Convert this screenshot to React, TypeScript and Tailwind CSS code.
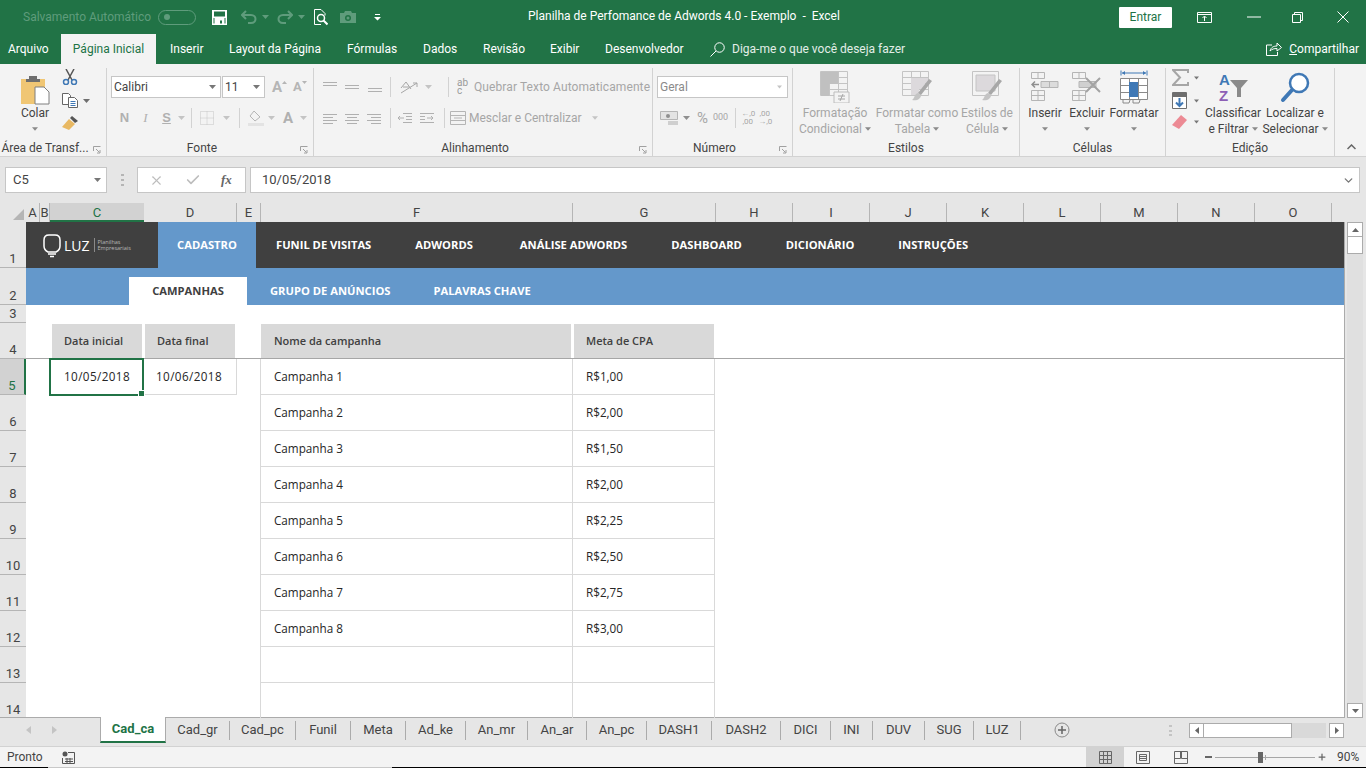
import React from "react";
import { ChevronDown, X, Check, Plus } from "lucide-react";

const ui = "font-['Roboto','Noto_Sans',sans-serif]";

const columns = [
  { name: "A", w: "w-[14px]" },
  { name: "B", w: "w-[10px]" },
  { name: "C", w: "w-[94px]", active: true },
  { name: "D", w: "w-[93px]" },
  { name: "E", w: "w-[24px]" },
  { name: "F", w: "w-[312px]" },
  { name: "G", w: "w-[143px]" },
  { name: "H", w: "w-[77px]" },
  { name: "I", w: "w-[77px]" },
  { name: "J", w: "w-[77px]" },
  { name: "K", w: "w-[77px]" },
  { name: "L", w: "w-[77px]" },
  { name: "M", w: "w-[77px]" },
  { name: "N", w: "w-[77px]" },
  { name: "O", w: "w-[77px]" },
];

const rows = [
  { n: 1, h: "h-[46px]" },
  { n: 2, h: "h-[37px]" },
  { n: 3, h: "h-[18px]" },
  { n: 4, h: "h-[36px]" },
  { n: 5, h: "h-[36px]", active: true },
  { n: 6, h: "h-[36px]" },
  { n: 7, h: "h-[36px]" },
  { n: 8, h: "h-[36px]" },
  { n: 9, h: "h-[36px]" },
  { n: 10, h: "h-[36px]" },
  { n: 11, h: "h-[36px]" },
  { n: 12, h: "h-[36px]" },
  { n: 13, h: "h-[36px]" },
  { n: 14, h: "h-[36px]" },
];

const campaigns = [
  ["Campanha 1", "R$1,00"],
  ["Campanha 2", "R$2,00"],
  ["Campanha 3", "R$1,50"],
  ["Campanha 4", "R$2,00"],
  ["Campanha 5", "R$2,25"],
  ["Campanha 6", "R$2,50"],
  ["Campanha 7", "R$2,75"],
  ["Campanha 8", "R$3,00"],
  ["", ""],
  ["", ""],
];

const sheets = [
  { name: "Cad_ca", w: "w-[66px]", active: true },
  { name: "Cad_gr", w: "w-[64px]" },
  { name: "Cad_pc", w: "w-[66px]" },
  { name: "Funil", w: "w-[55px]" },
  { name: "Meta", w: "w-[55px]" },
  { name: "Ad_ke", w: "w-[60px]" },
  { name: "An_mr", w: "w-[62px]" },
  { name: "An_ar", w: "w-[59px]" },
  { name: "An_pc", w: "w-[60px]" },
  { name: "DASH1", w: "w-[65px]" },
  { name: "DASH2", w: "w-[69px]" },
  { name: "DICI", w: "w-[50px]" },
  { name: "INI", w: "w-[42px]" },
  { name: "DUV", w: "w-[52px]" },
  { name: "SUG", w: "w-[49px]" },
  { name: "LUZ", w: "w-[47px]" },
];

const Caret = ({ className = "" }: { className?: string }) => (
  <svg width="7" height="4" viewBox="0 0 7 4" className={`shrink-0 ${className}`}>
    <path d="M0 0h7L3.5 4z" fill="currentColor" />
  </svg>
);

function Group({ label, w, launcher, children }: { label: string; w: string; launcher?: boolean; children: React.ReactNode }) {
  return (
    <div className={`${w} shrink-0 h-[88px] mt-[4px] border-r border-[#d2d2d2] flex flex-col relative`}>
      <div className="h-[72px] flex">{children}</div>
      <div className={`h-[16px] text-[12px] leading-[16px] text-[#444] text-center whitespace-nowrap ${launcher ? "pr-[16px]" : ""}`}>{label}</div>
      {launcher && (
        <svg width="8" height="8" viewBox="0 0 8 8" className="absolute right-[5px] bottom-[2px] text-[#a0a0a0]">
          <path d="M.5 5V.5H7.5" fill="none" stroke="currentColor" />
          <path d="M3 3l3.5 3.5M7 4v3H4" fill="none" stroke="currentColor" />
        </svg>
      )}
    </div>
  );
}

function BigButton({ w, line1, line2, caret, off, children }: { w: string; line1: string; line2?: string; caret?: boolean; off?: boolean; children: React.ReactNode }) {
  return (
    <div className={`${w} shrink-0 flex flex-col items-center text-[12px] leading-[16px] ${off ? "text-[#a6a6a6]" : "text-[#444]"}`}>
      <div className="h-[36px] mt-[1px] flex items-center justify-center">{children}</div>
      <div className="whitespace-nowrap">{line1}</div>
      <div className="whitespace-nowrap flex items-center justify-center gap-[3px] h-[16px]">
        {line2}
        {caret && <Caret className="w-[6px] text-[#8a8a8a]" />}
      </div>
    </div>
  );
}

const CondIcon = () => (
  <svg width="30" height="32" viewBox="0 0 30 32">
    <path d="M.5.5h27v24H.5zM9.5.5v24M18.5.5v24M.5 6.5h27M.5 12.5h27M.5 18.5h27" fill="none" stroke="#c4c4c4" />
    <path d="M1 1h8v24H1zM9 1h9v6H9zM9 7h9v6H9z" fill="#c0c0c0" />
    <path d="M14 21h15v11H14z" fill="#f3f3f3" stroke="#bdbdbd" />
    <path d="M18 25h7M18 28h7M23 23l-3 7" stroke="#a6a6a6" fill="none" />
  </svg>
);

const TableIcon = () => (
  <svg width="30" height="32" viewBox="0 0 30 32">
    <path d="M.5.5h26v24H.5zM9.5.5v24M18.5.5v24M.5 6.5h26M.5 12.5h26M.5 18.5h26" fill="none" stroke="#c4c4c4" />
    <path d="M9 7h17v5H9zM9 12h14v6H9zM9 18h8v6H9z" fill="#dcd9dc" />
    <path d="M30 10l-11 14-3-2 11-14z" fill="#a8a8a8" />
    <path d="M16 22c-4 1-3 5-6 7 5 1 9-1 9-5z" fill="#c4c4c4" />
  </svg>
);

const CellStyleIcon = () => (
  <svg width="30" height="32" viewBox="0 0 30 32">
    <path d="M.5.5h26v24H.5z" fill="none" stroke="#c4c4c4" />
    <path d="M4 4h19v16H4z" fill="#dcd9dc" stroke="#c4c4c4" />
    <path d="M30 10l-11 14-3-2 11-14z" fill="#a8a8a8" />
    <path d="M16 22c-4 1-3 5-6 7 5 1 9-1 9-5z" fill="#c4c4c4" />
  </svg>
);

const InsertIcon = () => (
  <svg width="28" height="30" viewBox="0 0 28 30">
    <path d="M.5.5h13v6H.5zM7 .5v6M.5 18.5h13v10H.5zM7 18.5v10M.5 23.5h13" fill="none" stroke="#b5b5b5" />
    <path d="M10 9.5h17v6H10zM18.5 9.5v6" fill="#dcdcdc" stroke="#b5b5b5" />
    <path d="M8 12.5H1M4 9.5l-3 3 3 3" fill="none" stroke="#8f8f8f" strokeWidth="1.5" />
  </svg>
);

const DeleteIcon = () => (
  <svg width="30" height="30" viewBox="0 0 30 30">
    <path d="M.5.5h13v6H.5zM7 .5v6M.5 18.5h13v10H.5zM7 18.5v10M.5 23.5h13" fill="none" stroke="#b5b5b5" />
    <path d="M7 9.5h17v6H7z" fill="#d0d0d0" stroke="#b5b5b5" />
    <path d="M14 6l14 14M28 6L14 20" stroke="#a3a3a3" strokeWidth="2" />
  </svg>
);

const FormatIcon = () => (
  <svg width="28" height="34" viewBox="0 0 28 34">
    <path d="M1 .5v5M27 .5v5M2 3h24" fill="none" stroke="#3f78b5" />
    <path d="M2 3l3-2v4zM26 3l-3-2v4z" fill="#3f78b5" />
    <path d="M.5 8.5h27v21H.5zM9.5 8.5v21M18.5 8.5v21M.5 15.5h27M.5 22.5h27" fill="#fff" stroke="#8a8a8a" />
    <path d="M9 12h9v15H9z" fill="#3f78b5" />
    <path d="M3 30v3h6l1-3M13 30v3h6l1-3" fill="none" stroke="#8a8a8a" />
  </svg>
);

const AlignLines = ({ pattern }: { pattern: string }) => (
  <svg width="16" height="14" viewBox="0 0 16 14" className="text-[#b0b0b0]">
    <path d={pattern} stroke="currentColor" strokeWidth="1" fill="none" />
  </svg>
);

export default function App() {
  return (
    <div className={`w-[1366px] h-[768px] overflow-hidden flex flex-col bg-[#e6e6e6] ${ui}`}>
      {/* title bar */}
      <div className="h-[34px] shrink-0 bg-[#217346] flex items-center text-white relative">
        <span className="ml-[23px] w-[135px] text-[12px] text-[#5f9c7c] whitespace-nowrap">Salvamento Automático</span>
        <div className="w-[38px] h-[15px] rounded-full border border-[#5f9c7c] flex items-center pl-[5px]">
          <div className="w-[6px] h-[6px] rounded-full bg-[#5f9c7c]" />
        </div>
        <svg width="15" height="15" viewBox="0 0 15 15" className="ml-[16px]">
          <path d="M0 0h15v15H0z" fill="#fff" />
          <path d="M2 1.500h11v5H2zM1.500 8h1v5.500h-1zM12.500 8h1v5.500h-1z" fill="#217346" />
          <path d="M8 10.500h2v3H8z" fill="#217346" />
        </svg>
        <svg width="16" height="14" viewBox="0 0 16 14" className="ml-[14px] text-[#5f9c7c]">
          <path d="M5 1L1 5l4 4M1 5h9c6 0 6 8 0 8H7" fill="none" stroke="currentColor" strokeWidth="2" />
        </svg>
        <Caret className="ml-[5px] text-[#5f9c7c]" />
        <svg width="16" height="14" viewBox="0 0 16 14" className="ml-[8px] text-[#5f9c7c]">
          <path d="M11 1l4 4-4 4M15 5H6c-6 0-6 8 0 8h3" fill="none" stroke="currentColor" strokeWidth="2" />
        </svg>
        <Caret className="ml-[5px] text-[#5f9c7c]" />
        <svg width="15" height="17" viewBox="0 0 15 17" className="ml-[8px]">
          <path d="M8 .5H1.5v15H8M8 .5l4 4v2" fill="none" stroke="#fff" />
          <circle cx="8" cy="9" r="3.5" fill="none" stroke="#fff" strokeWidth="1.5" />
          <path d="M10.5 11.5l4 4" stroke="#fff" strokeWidth="2" />
        </svg>
        <svg width="16" height="12" viewBox="0 0 16 12" className="ml-[12px] text-[#5f9c7c]">
          <path d="M0 2h4l1-2h6l1 2h4v10H0z" fill="currentColor" />
          <circle cx="8" cy="7" r="3" fill="#217346" />
          <circle cx="8" cy="7" r="1.5" fill="currentColor" />
        </svg>
        <svg width="7" height="7" viewBox="0 0 7 7" className="ml-[18px]">
          <path d="M1 0h5v1H1zM0 3h7L3.5 6.5z" fill="#fff" />
        </svg>
        <span className="absolute left-[528px] top-[8px] text-[12px] leading-[16px] whitespace-pre">Planilha de Perfomance de Adwords 4.0 - Exemplo  -  Excel</span>
        <div className="ml-auto flex items-center">
          <div className="w-[53px] h-[21px] bg-white rounded-[1px] text-[#217346] text-[12px] flex items-center justify-center">Entrar</div>
          <svg width="15" height="11" viewBox="0 0 15 11" className="ml-[25px]">
            <path d="M.5.5h14v10H.5zM.5 2.5h14M7.500 9V4.500M5.500 6l2-2 2 2" fill="none" stroke="#fff" />
          </svg>
          <svg width="14" height="2" viewBox="0 0 14 2" className="ml-[35px]"><path d="M0 1h14" stroke="#fff" /></svg>
          <svg width="11" height="11" viewBox="0 0 11 11" className="ml-[31px]">
            <path d="M.5 2.5h8v8h-8zM2.5 2.5v-2h8v8h-2" fill="none" stroke="#fff" />
          </svg>
          <svg width="12" height="12" viewBox="0 0 12 12" className="ml-[34px] mr-[17px]"><path d="M.5.5l11 11M11.500.5l-11 11" stroke="#fff" /></svg>
        </div>
      </div>

      {/* ribbon tabs */}
      <div className="h-[30px] shrink-0 bg-[#217346] flex items-stretch text-white text-[12px]">
        <span className="ml-[8px] w-[53px] leading-[30px]">Arquivo</span>
        <span className="w-[95px] bg-[#f3f3f3] text-[#217346] text-center leading-[30px]">Página Inicial</span>
        <span className="ml-[14px] w-[59px] leading-[30px]">Inserir</span>
        <span className="w-[118px] leading-[30px]">Layout da Página</span>
        <span className="w-[76px] leading-[30px]">Fórmulas</span>
        <span className="w-[60px] leading-[30px]">Dados</span>
        <span className="w-[67px] leading-[30px]">Revisão</span>
        <span className="w-[55px] leading-[30px]">Exibir</span>
        <span className="w-[105px] leading-[30px]">Desenvolvedor</span>
        <div className="flex items-center">
          <svg width="15" height="15" viewBox="0 0 15 15">
            <circle cx="9.500" cy="5.500" r="4.750" fill="none" stroke="#fff" />
            <path d="M6 9l-5.500 5.500" stroke="#fff" />
          </svg>
          <span className="ml-[7px] text-[#e3eee8]">Diga-me o que você deseja fazer</span>
        </div>
        <div className="ml-auto mr-[7px] flex items-center">
          <svg width="16" height="14" viewBox="0 0 16 14" className="mr-[7px]">
            <path d="M6 3H.5v10.5h11V10M4 9c1-4 4-5 7-5V1l4.500 4.500L11 9V6.500C8 6.500 6 7 4 9z" fill="none" stroke="#fff" />
          </svg>
          <span><span className="underline">C</span>ompartilhar</span>
        </div>
      </div>

      {/* ribbon */}
      <div className="h-[93px] shrink-0 bg-[#f3f3f3] border-b border-[#d2d2d2] flex relative">
        <Group label="Área de Transf..." w="w-[107px]" launcher>
          <BigButton w="w-[54px] ml-[8px]" line1="Colar" caret>
            <svg width="30" height="30" viewBox="0 0 30 30" className="mt-[6px]">
              <path d="M1 4h24v25H1z" fill="#f0c674" />
              <path d="M9 1h8v3h3v3H6V4h3z" fill="#6e6e6e" />
              <path d="M15 12h9l5 5v12H15z" fill="#fff" stroke="#7f7f7f" />
            </svg>
          </BigButton>
          <div className="flex flex-col items-start pt-[1px] gap-[8px] text-[#6e6e6e]">
            <svg width="16" height="16" viewBox="0 0 16 16">
              <path d="M4 0l6 11M12 0L6 11" stroke="#555" strokeWidth="1.5" />
              <circle cx="4" cy="13" r="2.5" fill="none" stroke="#3f78b5" strokeWidth="1.5" />
              <circle cx="12" cy="13" r="2.5" fill="none" stroke="#3f78b5" strokeWidth="1.5" />
            </svg>
            <div className="flex items-center gap-[5px]">
              <svg width="16" height="15" viewBox="0 0 16 15">
                <path d="M.5.5h6l2 2v9h-8z" fill="#fff" stroke="#666" />
                <path d="M6.500 4.500h6l3 3v7h-9z" fill="#fff" stroke="#666" />
                <path d="M8.500 8.500h5M8.500 10.500h5M8.500 12.500h5" stroke="#3f78b5" />
              </svg>
              <Caret />
            </div>
            <svg width="16" height="15" viewBox="0 0 16 15">
              <path d="M10 0l6 5-3 2-5-5z" fill="#555" />
              <path d="M7 3l6 5-6 6-7-3z" fill="#e8b862" />
            </svg>
          </div>
        </Group>

        <Group label="Fonte" w="w-[207px]" launcher>
          <div className="flex flex-col pl-[4px]">
            <div className="mt-[8px] flex items-center">
              <div className="w-[110px] h-[22px] bg-white border border-[#c6c6c6] flex items-center justify-between px-[2px] text-[12px] text-[#444]">
                Calibri
                <Caret className="mr-[2px] text-[#777]" />
              </div>
              <div className="ml-px w-[43px] h-[22px] bg-white border border-[#c6c6c6] flex items-center justify-between px-[2px] text-[12px] text-[#444]">
                11
                <Caret className="mr-[2px] text-[#777]" />
              </div>
              <span className="ml-[7px] text-[15px] leading-[18px] font-bold text-[#b5b5b5]">A</span>
              <svg width="5" height="3" viewBox="0 0 5 3" className="-mt-[10px] text-[#b5b5b5]"><path d="M0 3h5L2.500 0z" fill="currentColor" /></svg>
              <span className="ml-[6px] text-[13px] leading-[18px] font-bold text-[#b5b5b5]">A</span>
              <svg width="5" height="3" viewBox="0 0 5 3" className="-mt-[10px] text-[#b5b5b5]"><path d="M0 0h5L2.500 3z" fill="currentColor" /></svg>
            </div>
            <div className="mt-[9px] ml-[3px] flex items-center text-[#b0b0b0] h-[22px]">
              <span className="w-[21px] text-[13px] font-bold text-center font-['Liberation_Sans',sans-serif]">N</span>
              <span className="w-[21px] text-[13px] italic text-center font-['Liberation_Serif',serif]">I</span>
              <span className="w-[21px] text-[13px] font-bold underline text-center font-['Liberation_Sans',sans-serif]">S</span>
              <Caret className="ml-[1px] text-[#c4c4c4]" />
              <div className="ml-[6px] w-px h-[20px] bg-[#d2d2d2]" />
              <svg width="14" height="14" viewBox="0 0 14 14" className="ml-[8px]">
                <path d="M.5.5h13v13H.5zM7 .5v13M.5 7h13" fill="none" stroke="#c4c4c4" strokeDasharray="1 1" />
              </svg>
              <Caret className="ml-[9px] text-[#c4c4c4]" />
              <div className="ml-[9px] w-px h-[20px] bg-[#d2d2d2]" />
              <svg width="16" height="16" viewBox="0 0 16 16" className="ml-[8px]">
                <path d="M6 1l6 6-5 4-5-5z" fill="none" stroke="#b5b5b5" />
                <path d="M0 13h16v3H0z" fill="#e3e3e3" />
              </svg>
              <Caret className="ml-[4px] text-[#c4c4c4]" />
              <span className="ml-[8px] text-[15px] font-bold">A</span>
              <Caret className="ml-[7px] text-[#c4c4c4]" />
            </div>
          </div>
        </Group>

        <Group label="Alinhamento" w="w-[339px]" launcher>
          <div className="flex flex-col pl-[8px]">
            <div className="mt-[8px] h-[22px] flex items-center gap-[6px]">
              <AlignLines pattern="M1 2.500h14M1 5.500h14" />
              <AlignLines pattern="M1 5.500h14M1 8.500h14" />
              <AlignLines pattern="M2 8.500h14M2 11.500h14" />
              <div className="ml-[2px] w-px h-[20px] bg-[#d2d2d2]" />
              <svg width="20" height="16" viewBox="0 0 20 16" className="ml-[2px] text-[#a6a6a6]">
                <path d="M2 9l5-6 5 7M4 8h6M2 14L18 4M18 4h-4M18 4v4" fill="none" stroke="currentColor" />
              </svg>
              <Caret className="text-[#c4c4c4]" />
              <div className="ml-[10px] w-px h-[20px] bg-[#d2d2d2]" />
              <span className="ml-[2px] w-[12px] text-[10px] leading-[8px] text-[#9a9a9a]">ab c</span>
              <span className="-ml-[1px] text-[12px] tracking-[0.1px] text-[#a6a6a6] whitespace-nowrap">Quebrar Texto Automaticamente</span>
            </div>
            <div className="mt-[9px] h-[22px] flex items-center gap-[6px]">
              <AlignLines pattern="M1 3.500h14M1 6.500h10M1 9.500h14M1 12.500h10" />
              <AlignLines pattern="M1 3.500h14M3 6.500h10M1 9.500h14M3 12.500h10" />
              <AlignLines pattern="M1 3.500h14M5 6.500h10M1 9.500h14M5 12.500h10" />
              <div className="ml-[2px] w-px h-[20px] bg-[#d2d2d2]" />
              <AlignLines pattern="M6 2.500h9M9 5.500h6M9 8.500h6M6 11.500h9M1 7h6M3 5L1 7l2 2" />
              <AlignLines pattern="M1 2.500h14M1 5.500h5M1 8.500h5M1 11.500h14M8 7h6M12 5l2 2-2 2" />
              <div className="ml-[3px] w-px h-[20px] bg-[#d2d2d2]" />
              <svg width="16" height="14" viewBox="0 0 16 14" className="-ml-[1px]">
                <path d="M.5.5h15v13H.5zM.5 4.500h15M.5 9.500h15M4 7h8" fill="none" stroke="#b5b5b5" />
              </svg>
              <span className="-ml-[3px] text-[12px] text-[#a6a6a6] whitespace-nowrap">Mesclar e Centralizar</span>
              <Caret className="ml-[4px] w-[6px] text-[#c4c4c4]" />
            </div>
          </div>
        </Group>

        <Group label="Número" w="w-[140px]" launcher>
          <div className="flex flex-col pl-[4px]">
            <div className="mt-[8px] w-[131px] h-[22px] bg-white border border-[#c6c6c6] flex items-center justify-between px-[2px] text-[12px] text-[#8a8a8a]">
              Geral
              <Caret className="mr-[3px] w-[5px] text-[#c4c4c4]" />
            </div>
            <div className="mt-[9px] h-[22px] flex items-center text-[#a6a6a6]">
              <svg width="18" height="15" viewBox="0 0 18 15" className="ml-[3px]">
                <path d="M.5.500h17v8H.5z" fill="#e3e3e3" stroke="#b5b5b5" />
                <circle cx="8" cy="5" r="2" fill="#8f8f8f" />
                <path d="M8 11h10M8 13h10" stroke="#c4c4c4" strokeWidth="1.500" />
              </svg>
              <Caret className="ml-[5px] text-[#8f8f8f]" />
              <span className="ml-[7px] text-[15px] leading-[18px]">%</span>
              <span className="ml-[5px] text-[9px]">000</span>
              <div className="ml-[7px] w-px h-[20px] bg-[#d2d2d2]" />
              <span className="ml-[5px] w-[13px] text-[8px] leading-[8px] text-center">←,0 ,00</span>
              <span className="ml-[4px] w-[13px] text-[8px] leading-[8px] text-center">,00 →,0</span>
            </div>
          </div>
        </Group>

        <Group label="Estilos" w="w-[227px]">
          <BigButton w="w-[84px]" line1="Formatação" line2="Condicional" caret off><CondIcon /></BigButton>
          <BigButton w="w-[80px]" line1="Formatar como" line2="Tabela" caret off><TableIcon /></BigButton>
          <BigButton w="w-[60px]" line1="Estilos de" line2="Célula" caret off><CellStyleIcon /></BigButton>
        </Group>

        <Group label="Células" w="w-[146px]">
          <BigButton w="w-[42px] ml-[4px]" line1="Inserir" caret><InsertIcon /></BigButton>
          <BigButton w="w-[42px]" line1="Excluir" caret><DeleteIcon /></BigButton>
          <BigButton w="w-[52px]" line1="Formatar" caret><FormatIcon /></BigButton>
        </Group>

        <Group label="Edição" w="w-[169px]">
          <div className="w-[36px] pl-[6px] pt-[1px] flex flex-col gap-[6px] text-[#777]">
            <div className="flex items-center gap-[5px]">
              <svg width="17" height="17" viewBox="0 0 17 17"><path d="M16 4V1H1l7 7.500L1 16h15v-3" fill="none" stroke="#a6a6a6" strokeWidth="2" /></svg>
              <Caret className="w-[5px]" />
            </div>
            <div className="flex items-center gap-[5px]">
              <svg width="15" height="17" viewBox="0 0 15 17">
                <path d="M.5.500h14v16H.5z" fill="#fff" stroke="#6e6e6e" />
                <path d="M1 1h13v4H1z" fill="#6e6e6e" />
                <path d="M7.500 6v8M4 10.500l3.500 3.500 3.500-3.500" fill="none" stroke="#3f78b5" strokeWidth="2" />
              </svg>
              <Caret className="ml-[2px] w-[5px]" />
            </div>
            <div className="flex items-center gap-[5px]">
              <svg width="15" height="14" viewBox="0 0 15 14"><path d="M9 0l6 5-8 9-7-4z" fill="#ec8a94" /></svg>
              <Caret className="ml-[2px] w-[5px]" />
            </div>
          </div>
          <BigButton w="w-[62px]" line1="Classificar" line2="e Filtrar" caret>
            <svg width="30" height="32" viewBox="0 0 30 32">
              <text x="1" y="14" fontSize="15" fontWeight="700" fill="#3f78b5" fontFamily="Liberation Sans">A</text>
              <text x="1" y="30" fontSize="15" fontWeight="700" fill="#8d5fb5" fontFamily="Liberation Sans">Z</text>
              <path d="M12 9h18l-7 8v9h-4v-9z" fill="#8a8a8a" />
            </svg>
          </BigButton>
          <BigButton w="w-[62px]" line1="Localizar e" line2="Selecionar" caret>
            <svg width="30" height="32" viewBox="0 0 30 32" className="mt-[1px]">
              <circle cx="19" cy="11" r="9" fill="#fff" stroke="#3f78b5" strokeWidth="2.500" />
              <path d="M12 18L3 28" stroke="#3f78b5" strokeWidth="4" strokeLinecap="round" />
            </svg>
          </BigButton>
        </Group>

        <svg width="9" height="6" viewBox="0 0 9 6" className="absolute left-[1347px] bottom-[6px]">
          <path d="M.5 5l4-4 4 4" fill="none" stroke="#666" strokeWidth="1.500" />
        </svg>
      </div>

      {/* formula bar */}
      <div className="h-[46px] shrink-0 flex items-start pt-[10px] text-[13px] text-[#444]">
        <div className="ml-[5px] w-[102px] h-[26px] bg-white border border-[#c6c6c6] flex items-center justify-between pl-[7px] pr-[5px] text-[13px]">
          C5
          <Caret className="text-[#777]" />
        </div>
        <div className="ml-[14px] mt-[7px] w-[3px] h-[12px] flex flex-col justify-between">
          <div className="h-[2px] bg-[#b5b5b5]" />
          <div className="h-[2px] bg-[#b5b5b5]" />
          <div className="h-[2px] bg-[#b5b5b5]" />
        </div>
        <div className="ml-[13px] w-[109px] h-[26px] bg-white border border-[#c6c6c6] flex items-center text-[#bdbdbd]">
          <X size={15} strokeWidth={1.750} className="ml-[11px]" />
          <Check size={16} strokeWidth={2.500} className="ml-[21px]" />
          <span className="ml-[20px] text-[13px] italic font-bold text-[#666] font-['Liberation_Serif',serif]">fx</span>
        </div>
        <div className="ml-[4px] w-[1110px] h-[26px] bg-white border border-[#c6c6c6] flex items-center justify-between pl-[11px] pr-[4px] text-[13px]">
          10/05/2018
          <ChevronDown size={13} strokeWidth={2.500} className="text-[#777]" />
        </div>
      </div>

      {/* column headers */}
      <div className="h-[19px] shrink-0 flex text-[13px] leading-[19px] text-[#444]">
        <div className="w-[26px] flex items-end justify-end pb-[2px] pr-[2px]">
          <svg width="11" height="11" viewBox="0 0 11 11"><path d="M11 0v11H0z" fill="#b5b5b5" /></svg>
        </div>
        {columns.map((c) => (
          <div
            key={c.name}
            className={`${c.w} shrink-0 text-center ${c.active ? "bg-[#d2d2d2] text-[#217346] border-b-2 border-[#217346]" : "border-r border-[#b5b5b5]"}`}
          >
            {c.name}
          </div>
        ))}
      </div>

      {/* sheet */}
      <div className="h-[496px] shrink-0 flex overflow-hidden">
        <div className="w-[26px] shrink-0 flex flex-col border-b border-[#ababab] overflow-hidden">
          {rows.map((r) => (
            <div
              key={r.n}
              className={`${r.h} shrink-0 border-b border-[#b5b5b5] flex items-end justify-center text-[13px] leading-[16px] ${r.active ? "bg-[#d2d2d2] text-[#217346] border-r-2 border-r-[#217346]" : "text-[#444]"}`}
            >
              {r.n}
            </div>
          ))}
        </div>

        <div className="w-[1319px] shrink-0 bg-white flex flex-col border-r border-b border-[#ababab] font-['Open_Sans',sans-serif]">
          <div className="h-[46px] shrink-0 bg-[#404040] flex items-center text-[11.2px] font-bold text-white">
            <div className="w-[132px] flex items-center pl-[17px]">
              <svg width="18" height="25" viewBox="0 0 18 25">
                <path d="M6 2h6c3 0 5 2 5 5v6c0 3-2 5-4 6H5c-2-1-4-3-4-6V7c0-3 2-5 5-5z" fill="none" stroke="#fff" strokeWidth="1.500" />
                <path d="M5 21h8M7 23.500h4" stroke="#fff" strokeWidth="1.500" />
              </svg>
              <span className="ml-[3px] text-[14px] font-normal">LUZ</span>
              <div className="ml-[4px] w-px h-[14px] bg-[#8a8a8a]" />
              <span className="ml-[3px] w-[32px] text-[5.500px] leading-[6px] font-normal text-[#b8b8b8]">Planilhas Empresariais</span>
            </div>
            <div className="w-[98px] h-full bg-[#6498cb] flex items-center justify-center">CADASTRO</div>
            <div className="ml-[20px] flex gap-[44px] whitespace-nowrap">
              <span>FUNIL DE VISITAS</span>
              <span>ADWORDS</span>
              <span className="ml-[3px]">ANÁLISE ADWORDS</span>
              <span>DASHBOARD</span>
              <span>DICIONÁRIO</span>
              <span>INSTRUÇÕES</span>
            </div>
          </div>

          <div className="h-[37px] shrink-0 bg-[#6498cb] flex items-end text-[11.2px] font-bold text-white">
            <div className="ml-[103px] w-[118px] h-[28px] bg-white text-[#404040] flex items-center justify-center">CAMPANHAS</div>
            <div className="ml-[23px] h-[28px] flex items-center gap-[43px] whitespace-nowrap">
              <span>GRUPO DE ANÚNCIOS</span>
              <span>PALAVRAS CHAVE</span>
            </div>
          </div>

          <div className="h-[18px] shrink-0" />

          <div className="grid grid-cols-[24px_93px_94px_23px_312px_143px_1fr] grid-rows-[36px_36px] auto-rows-[36px] text-[11.7px] text-[#404040]">
            {/* header row */}
            <div className="border-b border-[#a6a6a6]" />
            <div className="border-b border-[#a6a6a6] pl-[2px] pr-px pt-px">
              <div className="h-full bg-[#d9d9d9] text-[11px] font-semibold flex items-center pl-[12px]">Data inicial</div>
            </div>
            <div className="border-b border-[#a6a6a6] pl-[2px] pr-[2px] pt-px">
              <div className="h-full bg-[#d9d9d9] text-[11px] font-semibold flex items-center pl-[12px]">Data final</div>
            </div>
            <div className="border-b border-[#a6a6a6]" />
            <div className="border-b border-[#a6a6a6] pl-px pr-px pt-px">
              <div className="h-full bg-[#d9d9d9] text-[11px] font-semibold flex items-center pl-[13px]">Nome da campanha</div>
            </div>
            <div className="border-b border-[#a6a6a6] pl-[2px] pr-px pt-px">
              <div className="h-full bg-[#d9d9d9] text-[11px] font-semibold flex items-center pl-[12px]">Meta de CPA</div>
            </div>
            <div className="border-b border-[#a6a6a6]" />

            {campaigns.map(([name, cpa], i) => (
              <React.Fragment key={i}>
                <div />
                {i === 0 ? (
                  <div className="relative -ml-px -mr-px -mt-px -mb-px border-2 border-[#217346] flex items-center pl-[13px] text-[#262626] tracking-[0.4px]">
                    10/05/2018
                    <div className="absolute -right-[3px] -bottom-[3px] w-[5px] h-[5px] bg-[#217346] border border-white box-content" />
                  </div>
                ) : (
                  <div />
                )}
                {i === 0 ? (
                  <div className="border-r border-b border-[#d9d9d9] flex items-center pl-[13px] pt-px text-[#262626] tracking-[0.4px]">10/06/2018</div>
                ) : (
                  <div />
                )}
                <div />
                <div className="border-l border-b border-[#d9d9d9] flex items-center pl-[13px] pt-px text-[#262626]">{name}</div>
                <div className="border-l border-r border-b border-[#d9d9d9] flex items-center pl-[13px] pt-px text-[#262626]">{cpa}</div>
                <div />
              </React.Fragment>
            ))}
          </div>
        </div>

        {/* vertical scrollbar */}
        <div className="w-[21px] shrink-0 pl-[2px] flex flex-col text-[#666]">
          <div className="w-[16px] h-[15px] bg-white border border-[#ababab] flex items-center justify-center">
            <svg width="7" height="4" viewBox="0 0 7 4"><path d="M0 4h7L3.500 0z" fill="currentColor" /></svg>
          </div>
          <div className="w-[16px] h-[17px] bg-white border border-t-0 border-[#ababab]" />
          <div className="w-[16px] flex-1 bg-[#e0e0e0]" />
          <div className="w-[16px] h-[15px] bg-white border border-[#ababab] flex items-center justify-center">
            <Caret />
          </div>
        </div>
      </div>

      {/* sheet tabs */}
      <div className="h-[28px] shrink-0 flex text-[13px] text-[#444] relative">
        <div className="w-[100px] shrink-0 flex items-center pl-[26px] gap-[21px] text-[#c4c4c4] h-[24px]">
          <svg width="5" height="8" viewBox="0 0 5 8"><path d="M5 0v8L0 4z" fill="currentColor" /></svg>
          <svg width="5" height="8" viewBox="0 0 5 8"><path d="M0 0v8l5-4z" fill="currentColor" /></svg>
        </div>
        {sheets.map((s) =>
          s.active ? (
            <div key={s.name} className={`${s.w} shrink-0 -mt-px h-[26px] bg-white border-l border-r border-[#ababab] border-b-2 border-b-[#217346] font-bold text-[#217346] flex items-center justify-center`}>
              {s.name}
            </div>
          ) : (
            <div key={s.name} className={`${s.w} shrink-0 h-[24px] flex items-center justify-center`}>
              <span className="flex-1 text-center">{s.name}</span>
              <div className="w-px h-[19px] bg-[#ababab]" />
            </div>
          )
        )}
        <svg width="16" height="16" viewBox="0 0 16 16" className="ml-[33px] mt-[4px]">
          <circle cx="8" cy="8" r="7" fill="none" stroke="#8a8a8a" />
          <path d="M8 4v8M4 8h8" stroke="#666" strokeWidth="1.500" />
        </svg>
        <div className="ml-[99px] mt-[7px] w-[3px] h-[11px] flex flex-col justify-between">
          <div className="h-[2px] bg-[#c4c4c4]" />
          <div className="h-[2px] bg-[#c4c4c4]" />
          <div className="h-[2px] bg-[#c4c4c4]" />
        </div>
        <div className="ml-[17px] mt-[5px] w-[155px] h-[15px] flex text-[#666]">
          <div className="w-[15px] bg-white border border-[#ababab] flex items-center justify-center">
            <svg width="4" height="7" viewBox="0 0 4 7"><path d="M4 0v7L0 3.500z" fill="currentColor" /></svg>
          </div>
          <div className="w-[88px] bg-white border-y border-r border-[#ababab]" />
          <div className="w-[34px] bg-[#d9d9d9]" />
          <div className="ml-[3px] w-[15px] bg-white border border-[#ababab] flex items-center justify-center">
            <svg width="4" height="7" viewBox="0 0 4 7"><path d="M0 0v7l4-3.500z" fill="currentColor" /></svg>
          </div>
        </div>
      </div>

      {/* status bar */}
      <div className="h-[20px] shrink-0 bg-[#f3f3f3] border-t border-[#d2d2d2] flex items-center text-[12px] text-[#444] box-content">
        <span className="ml-[7px] w-[55px]">Pronto</span>
        <svg width="13" height="13" viewBox="0 0 13 13">
          <circle cx="3" cy="3" r="2.500" fill="#555" />
          <path d="M6 1.500h6.500v11H.5V7" fill="none" stroke="#555" />
          <path d="M3 8h8M3 10.500h8M5 7v5M8 7v5" stroke="#555" />
        </svg>
        <div className="ml-[1011px] w-[38px] h-full bg-[#d2d2d2] flex items-center justify-center">
          <svg width="13" height="13" viewBox="0 0 13 13"><path d="M.5.500h12v12H.5zM4.500.500v12M8.500.500v12M.5 4.500h12M.5 8.500h12" fill="none" stroke="#666" /></svg>
        </div>
        <svg width="14" height="13" viewBox="0 0 14 13" className="ml-[12px]">
          <path d="M.5.500h13v12H.5zM3.500 3.500h7v6h-7zM3.500 5.500h7M3.500 7.500h7" fill="none" stroke="#666" />
        </svg>
        <svg width="14" height="13" viewBox="0 0 14 13" className="ml-[24px]">
          <path d="M.5.500h13v12H.5zM.5 7.500h6v-7M7.500.500v7h6" fill="none" stroke="#666" />
        </svg>
        <div className="ml-[17px] w-[7px] h-[2px] bg-[#666]" />
        <div className="ml-[3px] w-[100px] h-px bg-[#a6a6a6] relative">
          <div className="absolute left-[43px] -top-[5px] w-[5px] h-[11px] bg-[#666]" />
          <div className="absolute left-[50px] -top-[2px] w-px h-[5px] bg-[#a6a6a6]" />
        </div>
        <Plus size={10} strokeWidth={3} className="ml-[2px] text-[#666]" />
        <span className="ml-[10px]">90%</span>
      </div>

      <div className="h-[2px] shrink-0 flex bg-black">
        <div className="ml-[48px] w-[344px] bg-[#c8c8c8]" />
      </div>
    </div>
  );
}
